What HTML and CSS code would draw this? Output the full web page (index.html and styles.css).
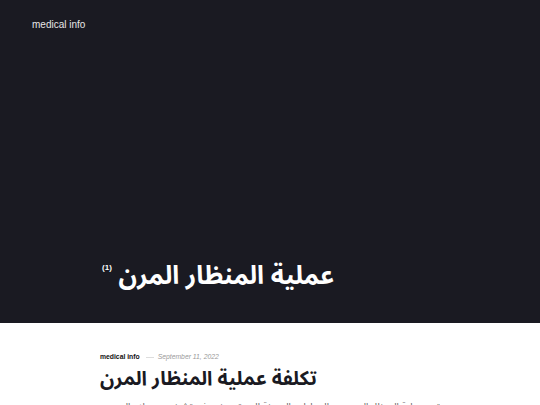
FILE: index.html
```html
<!DOCTYPE html>
<html lang="ar">
<head>
<meta charset="utf-8">
<title>عملية المنظار المرن</title>
<link rel="stylesheet" href="styles.css">
</head>
<body>
<header class="hero">
  <div class="topbar"><a class="brand" href="#">medical info</a></div>
  <div class="hero-inner">
    <h1 class="hero-title">عملية المنظار المرن <sup class="count">(1)</sup></h1>
  </div>
</header>
<main class="posts">
  <article class="post">
    <div class="meta"><span class="cat">medical info</span><span class="sep"></span><span class="date">September 11, 2022</span></div>
    <h2 class="post-title">تكلفة عملية المنظار المرن</h2>
    <p class="excerpt">تعد عملية المنظار المرن من العمليات الحديثة التي تستخدم في تشخيص وعلاج العديد من أمراض الجهاز الهضمي</p>
  </article>
</main>
</body>
</html>
```
FILE: styles.css
```css
html, body { margin: 0; padding: 0; }
body {
  background: #ffffff;
  font-family: "Liberation Sans", "Noto Sans Arabic", sans-serif;
  overflow: hidden;
  height: 405px;
}
.hero {
  background: #1a1a22;
  height: 323px;
  display: flex;
  flex-direction: column;
}
.topbar {
  padding: 14px 32px 0;
  height: 22px;
}
.brand {
  color: #e6e6e6;
  font-size: 10px;
  text-decoration: none;
  line-height: 14px;
}
.hero-inner {
  flex: 1;
  width: 340px;
  margin: 0 auto;
  display: flex;
  align-items: flex-end;
  padding-bottom: 30px;
}
.hero-title {
  margin: 0;
  color: #ffffff;
  font-family: "Noto Sans Arabic", "Noto Sans", "DejaVu Sans", sans-serif;
  font-size: 25.5px;
  font-weight: bold;
  direction: rtl;
  text-align: left;
  line-height: 34px;
}
.count {
  font-family: "Liberation Sans", sans-serif;
  font-size: 8px;
  font-weight: bold;
  vertical-align: 14px;
  margin-left: 2px;
}
.posts {
  width: 340px;
  margin: 0 auto;
  padding-top: 29px;
}
.meta {
  display: flex;
  align-items: center;
  gap: 4px;
  font-size: 6.8px;
  line-height: 10px;
}
.cat { font-weight: bold; color: #111; margin-right: 2px; }
.sep { width: 8px; height: 1px; background: #ddd; }
.date { color: #9a9a9a; font-style: italic; }
.post-title {
  margin: 3px 0 0;
  font-family: "Noto Sans Arabic", "Noto Sans", "DejaVu Sans", sans-serif;
  font-size: 19.7px;
  font-weight: bold;
  color: #1a1a22;
  direction: rtl;
  text-align: left;
  line-height: 28px;
}
.excerpt {
  margin: 5px 0 0;
  font-family: "Noto Sans Arabic", "Noto Sans", "DejaVu Sans", sans-serif;
  font-size: 10px;
  color: #666;
  direction: rtl;
  text-align: justify;
  line-height: 18px;
  white-space: nowrap;
  overflow: hidden;
}
```
